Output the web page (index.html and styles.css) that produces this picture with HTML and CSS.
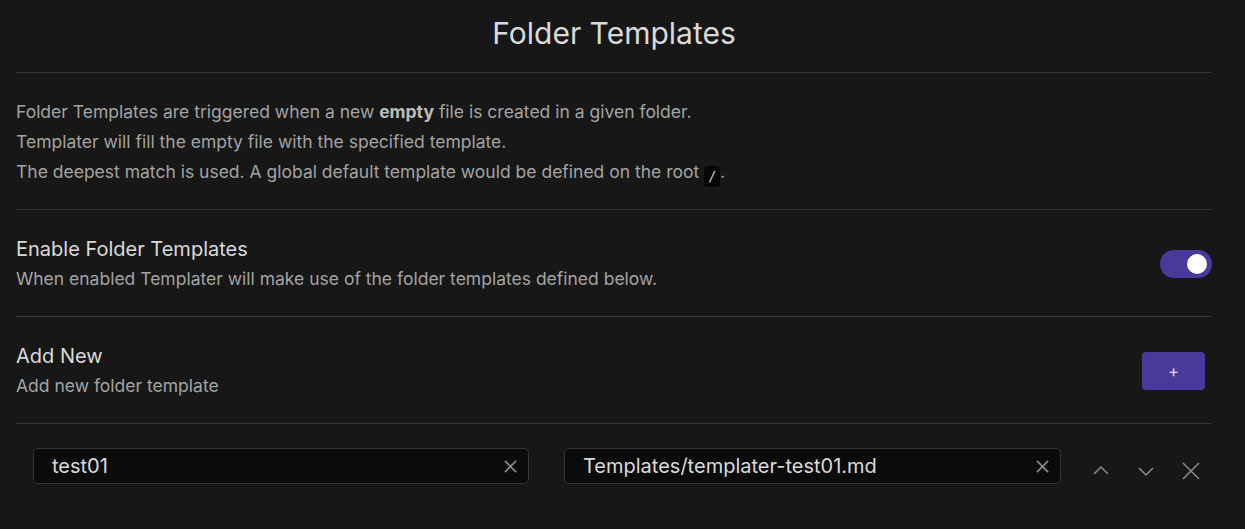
FILE: index.html
```html
<!DOCTYPE html>
<html lang="en">
<head>
    <meta charset="UTF-8">
    <title>Folder Templates</title>
    <link rel="stylesheet" href="styles.css">
</head>
<body>
    <div class="container">
        <div class="header">
            <h2>Folder Templates</h2>
        </div>

        <div class="intro">
            <div>Folder Templates are triggered when a new <strong>empty</strong> file is created in a given folder.</div>
            <div>Templater will fill the empty file with the specified template.</div>
            <div>The deepest match is used. A global default template would be defined on the root <code>/</code>.</div>
        </div>

        <div class="setting-item">
            <div class="setting-info">
                <div class="setting-name">Enable Folder Templates</div>
                <div class="setting-desc">When enabled Templater will make use of the folder templates defined below.</div>
            </div>
            <div class="toggle on"><span class="knob"></span></div>
        </div>

        <div class="setting-item">
            <div class="setting-info">
                <div class="setting-name">Add New</div>
                <div class="setting-desc">Add new folder template</div>
            </div>
            <button class="add-btn">+</button>
        </div>

        <div class="template-row">
            <div class="search-input">
                <input type="text" value="test01">
                <svg class="clear" width="14" height="14" viewBox="0 0 14 14"><path d="M1 1L13 13M13 1L1 13" stroke="currentColor" stroke-width="1.8" fill="none"/></svg>
            </div>
            <div class="search-input">
                <input type="text" value="Templates/templater-test01.md">
                <svg class="clear" width="14" height="14" viewBox="0 0 14 14"><path d="M1 1L13 13M13 1L1 13" stroke="currentColor" stroke-width="1.8" fill="none"/></svg>
            </div>
            <div class="row-actions">
                <svg width="20" height="20" viewBox="0 0 20 20"><path d="M3 13L10 6L17 13" stroke="currentColor" stroke-width="1.5" fill="none"/></svg>
                <svg width="20" height="20" viewBox="0 0 20 20"><path d="M3 7L10 14L17 7" stroke="currentColor" stroke-width="1.5" fill="none"/></svg>
                <svg width="20" height="20" viewBox="0 0 20 20"><path d="M2 2L18 18M18 2L2 18" stroke="currentColor" stroke-width="1.5" fill="none"/></svg>
            </div>
        </div>
    </div>
</body>
</html>
```

FILE: styles.css
```css
* {
    margin: 0;
    padding: 0;
    box-sizing: border-box;
}

body {
    font-family: Inter, "Noto Sans", sans-serif;
    background: #171717;
    color: #dadada;
    height: 100vh;
    overflow: hidden;
}

.container {
    padding: 0 33px 0 16px;
}

.header {
    height: 73px;
    border-bottom: 1px solid #363636;
    display: flex;
    align-items: flex-start;
    justify-content: center;
}

.header h2 {
    font-size: 30px;
    font-weight: 400;
    line-height: 36px;
    margin-top: 15px;
    color: #dadada;
}

.intro {
    padding: 24px 0 22px;
    font-size: 17.5px;
    line-height: 30px;
    color: #a3a3a3;
    border-bottom: 1px solid #363636;
}

.intro strong {
    color: #bcbcbc;
    font-weight: 700;
}

.intro code {
    display: inline-block;
    width: 16px;
    height: 21px;
    line-height: 21px;
    text-align: center;
    vertical-align: -3px;
    font-family: "DejaVu Sans Mono", monospace;
    font-size: 14px;
    background: #050505;
    color: #c8c8c8;
    border-radius: 4px;
}

.setting-item {
    display: flex;
    align-items: center;
    justify-content: space-between;
    padding: 25px 0 23px;
    border-bottom: 1px solid #363636;
}

.setting-name {
    font-size: 20px;
    line-height: 29px;
    color: #dadada;
}

.setting-desc {
    font-size: 17.5px;
    line-height: 29px;
    color: #a3a3a3;
}

.toggle {
    width: 52px;
    height: 28px;
    border-radius: 14px;
    background: #4a389b;
    display: flex;
    align-items: center;
    justify-content: flex-end;
    padding: 0 5px;
}

.knob {
    width: 20px;
    height: 20px;
    border-radius: 50%;
    background: #fff;
}

.add-btn {
    width: 63px;
    height: 38px;
    margin-right: 7px;
    border: none;
    border-radius: 4px;
    background: #4a389b;
    color: #e6e6e6;
    font-family: Inter, sans-serif;
    font-size: 16px;
}

.template-row {
    display: flex;
    align-items: center;
    padding: 24px 0 0 17px;
}

.search-input {
    display: flex;
    align-items: center;
    height: 36px;
    background: #0b0b0b;
    border: 1px solid #363636;
    border-radius: 5px;
}

.search-input:first-child {
    width: 496px;
    margin-right: 35px;
}

.search-input:nth-child(2) {
    width: 497px;
}

.search-input input {
    flex: 1;
    min-width: 0;
    background: transparent;
    border: none;
    outline: none;
    color: #dadada;
    font-family: Inter, sans-serif;
    font-size: 20px;
    padding-left: 18px;
}

.clear {
    width: 13px;
    height: 13px;
    color: #8a8a8a;
    margin-right: 11px;
}

.row-actions {
    display: flex;
    align-items: center;
    gap: 25px;
    margin-left: 30px;
    margin-top: 9px;
    color: #8c8c8c;
}
```
